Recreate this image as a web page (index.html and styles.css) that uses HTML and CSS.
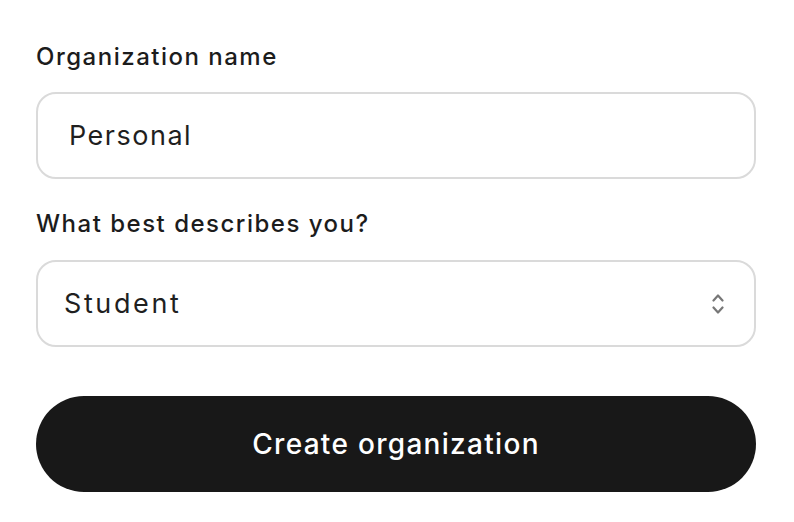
FILE: index.html
```html
<!DOCTYPE html>
<html>
<head>
<meta charset="utf-8">
<link rel="stylesheet" href="styles.css">
</head>
<body>
<form class="form">
  <div class="field field-name">
    <label class="label">Organization name</label>
    <div class="input">Personal</div>
  </div>
  <div class="field">
    <label class="label">What best describes you?</label>
    <div class="select">
      <span class="select-value">Student</span>
      <svg class="chevrons" width="12" height="22" viewBox="0 0 12 22" fill="none" stroke="#777777" stroke-width="2.2" stroke-linecap="round" stroke-linejoin="round">
        <path d="M1.5 7.5 L6 2.5 L10.5 7.5"/>
        <path d="M1.5 14.5 L6 19.5 L10.5 14.5"/>
      </svg>
    </div>
  </div>
  <button class="btn" type="button">Create organization</button>
</form>
</body>
</html>
```
FILE: styles.css
```css
html, body {
  margin: 0;
  padding: 0;
  background: #ffffff;
}
body {
  font-family: Inter, "Noto Sans", sans-serif;
  color: #1f1f1f;
}
.form {
  width: 720px;
  padding: 41px 0 0 36px;
  display: flex;
  flex-direction: column;
}
.field {
  display: flex;
  flex-direction: column;
  gap: 20px;
  margin-bottom: 26px;
}
.field-name {
  gap: 19px;
  margin-bottom: 29px;
}
.label {
  font-size: 24px;
  font-weight: 500;
  line-height: 32px;
  letter-spacing: 1.5px;
  color: #1c1c1c;
}
.input, .select {
  box-sizing: border-box;
  height: 87px;
  border: 2px solid #dadada;
  border-radius: 20px;
  font-size: 27px;
  color: #1f1f1f;
  display: flex;
  align-items: center;
}
.input {
  padding-left: 31px;
  letter-spacing: 1.5px;
}
.select {
  padding-left: 26px;
  padding-right: 30px;
  justify-content: space-between;
  letter-spacing: 2.6px;
}
.chevrons {
  display: block;
}
.btn {
  margin-top: 23px;
  height: 96px;
  border: none;
  border-radius: 48px;
  background: #181818;
  color: #ffffff;
  font-family: Inter, "Noto Sans", sans-serif;
  font-size: 28px;
  font-weight: 500;
  letter-spacing: 1.3px;
  padding: 0;
}
```
